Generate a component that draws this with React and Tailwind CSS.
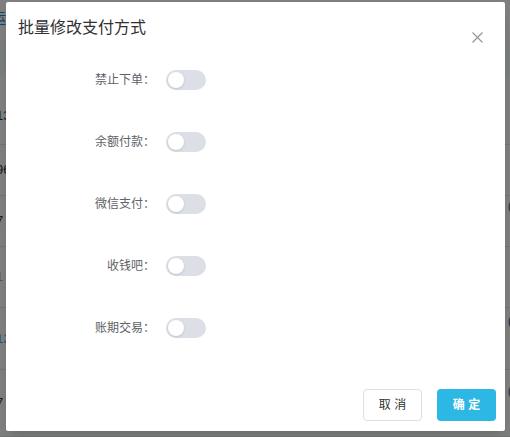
const switches = ['禁止下单', '余额付款', '微信支付', '收钱吧', '账期交易'];

const pageRows = [
  { h: 'h-[70px] pt-[12px]', left: '138', leftColor: 'text-[#333]', right: null, rightPos: '' },
  { h: 'h-[51px]', left: '96', leftColor: 'text-[#333]', right: null, rightPos: '' },
  { h: 'h-[51px]', left: '7', leftColor: 'text-[#333]', right: '(', rightPos: 'self-start mt-[0px]' },
  { h: 'h-[61px]', left: '1', leftColor: 'text-[#e6a23c]', right: null, rightPos: '' },
  { h: 'h-[62px]', left: '13', leftColor: 'text-[#409eff]', right: '(', rightPos: 'self-start mt-[3px]' },
  { h: 'h-[67px]', left: '7', leftColor: 'text-[#333]', right: '(', rightPos: 'self-start mt-[11px]' },
];

function Toggle() {
  return (
    <button type="button" className="flex h-[20px] w-[40px] items-center rounded-full bg-[#dcdfe6] p-[2px]">
      <span className="h-[16px] w-[16px] rounded-full bg-white shadow-sm" />
    </button>
  );
}

export default function App() {
  return (
    <div className="relative h-[437px] w-[510px] overflow-hidden bg-white font-['Liberation_Sans','Noto_Sans_CJK_SC',sans-serif]">
      {/* page behind the mask */}
      <div className="flex h-[40px] items-center pb-[4px] text-[14px] text-[#1e90d6]">
        <span className="-ml-[8px]">运营</span>
      </div>
      <div className="h-[35px] bg-[#f2fafa]" />
      {pageRows.map((r, i) => (
        <div key={i} className={`flex items-center justify-between border-b border-[#e6e9ef] text-[13px] ${r.h}`}>
          <span className={`-ml-[4px] ${r.leftColor}`}>{r.left}</span>
          {r.right && <span className={`mr-[-2px] text-[#2a5a8a] ${r.rightPos}`}>{r.right}</span>}
        </div>
      ))}

      <div className="absolute inset-0 bg-black/50" />

      <div className="absolute left-[6px] top-[2px] flex h-[429px] w-[499px] flex-col rounded-[2px] bg-white shadow-lg">
        <div className="h-[47px] pl-[12px] pt-[14px]">
          <h2 className="text-[16px] leading-6 text-[#303133]">批量修改支付方式</h2>
        </div>
        <button type="button" className="absolute right-[22px] top-[30px] h-[11px] w-[11px]">
          <svg viewBox="0 0 11 11" className="h-[11px] w-[11px]" fill="none" stroke="#909399" strokeWidth="1.1">
            <path d="M0.5 0.5L10.5 10.5M10.5 0.5L0.5 10.5" />
          </svg>
        </button>

        <div className="flex flex-col">
          {switches.map((label) => (
            <div key={label} className="flex h-[62px] items-center">
              <span className="w-[149px] text-right text-[12px] text-[#606266]">{label}：</span>
              <span className="ml-[11px]">
                <Toggle />
              </span>
            </div>
          ))}
        </div>

        <div className="mt-auto flex justify-end gap-[15px] pb-[10px] pr-[9px]">
          <button type="button" className="h-[32px] w-[59px] rounded-[4px] border border-[#dcdfe6] bg-white text-[12px] text-[#333]">
            取 消
          </button>
          <button type="button" className="h-[32px] w-[59px] rounded-[4px] bg-[#2db7e4] text-[12px] font-semibold text-white">
            确 定
          </button>
        </div>
      </div>
    </div>
  );
}
